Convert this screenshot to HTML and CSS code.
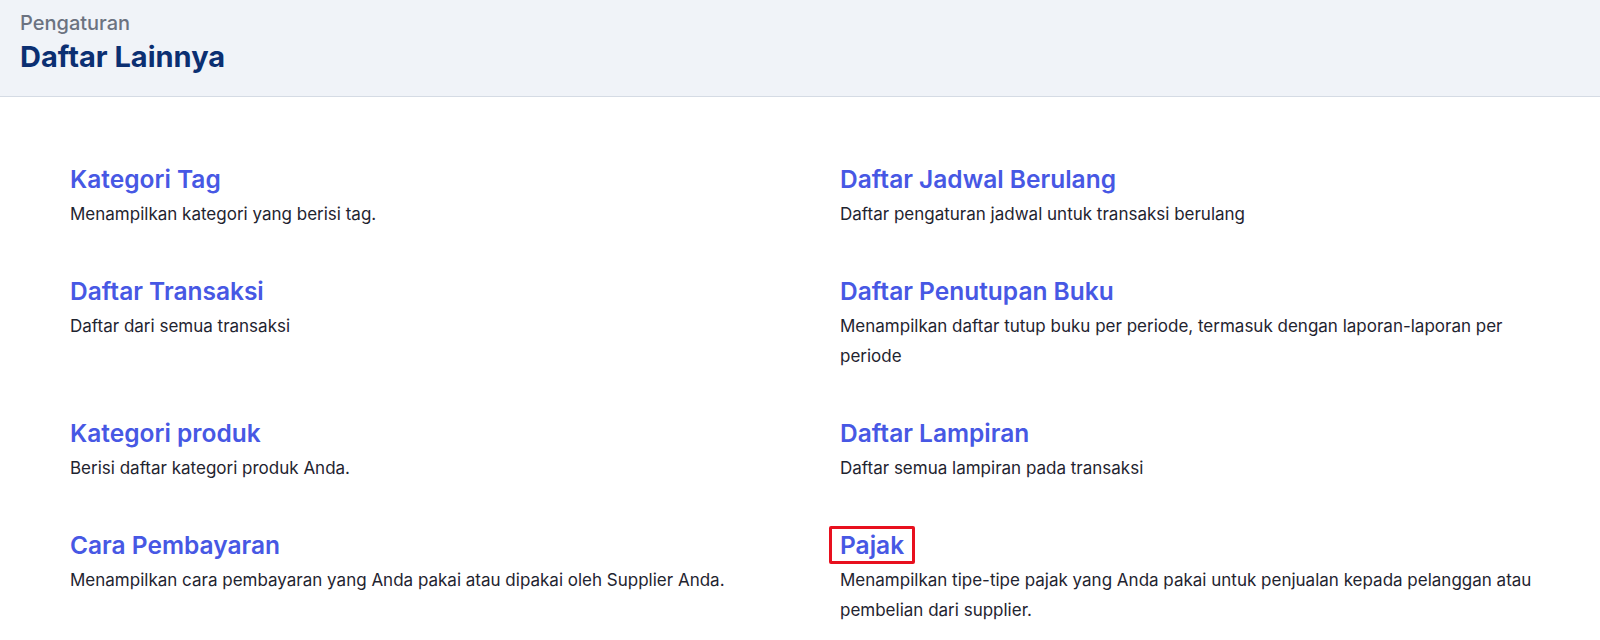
FILE: index.html
```html
<!DOCTYPE html>
<html lang="id">
<head>
<meta charset="utf-8">
<title>Daftar Lainnya</title>
<link rel="stylesheet" href="styles.css">
</head>
<body>
<header class="page-header">
  <div class="crumb">Pengaturan</div>
  <h1 class="page-title">Daftar Lainnya</h1>
</header>
<main class="list-grid">
  <section class="item">
    <a class="item-title" href="#">Kategori Tag</a>
    <p class="item-desc">Menampilkan kategori yang berisi tag.</p>
  </section>
  <section class="item">
    <a class="item-title" href="#">Daftar Jadwal Berulang</a>
    <p class="item-desc">Daftar pengaturan jadwal untuk transaksi berulang</p>
  </section>
  <section class="item">
    <a class="item-title" href="#">Daftar Transaksi</a>
    <p class="item-desc">Daftar dari semua transaksi</p>
  </section>
  <section class="item">
    <a class="item-title" href="#">Daftar Penutupan Buku</a>
    <p class="item-desc">Menampilkan daftar tutup buku per periode, termasuk dengan laporan-laporan per periode</p>
  </section>
  <section class="item">
    <a class="item-title" href="#">Kategori produk</a>
    <p class="item-desc">Berisi daftar kategori produk Anda.</p>
  </section>
  <section class="item">
    <a class="item-title" href="#">Daftar Lampiran</a>
    <p class="item-desc">Daftar semua lampiran pada transaksi</p>
  </section>
  <section class="item">
    <a class="item-title" href="#">Cara Pembayaran</a>
    <p class="item-desc">Menampilkan cara pembayaran yang Anda pakai atau dipakai oleh Supplier Anda.</p>
  </section>
  <section class="item">
    <a class="item-title highlighted" href="#">Pajak</a>
    <p class="item-desc">Menampilkan tipe-tipe pajak yang Anda pakai untuk penjualan kepada pelanggan atau pembelian dari supplier.</p>
  </section>
</main>
</body>
</html>
```
FILE: styles.css
```css
* { box-sizing: border-box; }
html, body { margin: 0; padding: 0; background: #ffffff; }
body {
  font-family: Inter, "Noto Sans", "Liberation Sans", sans-serif;
  color: #1f2430;
}
.page-header {
  height: 97px;
  background: #f0f3f8;
  border-bottom: 1px solid #d5dbe4;
  padding: 10px 20px 0;
}
.crumb {
  font-size: 20px;
  line-height: 26px;
  font-weight: 500;
  color: #6b7280;
}
.page-title {
  margin: 3px 0 0;
  font-size: 29px;
  line-height: 36px;
  font-weight: 700;
  color: #0b2f72;
}
.list-grid {
  display: grid;
  grid-template-columns: 1fr 1fr;
  column-gap: 50px;
  row-gap: 46px;
  padding: 66px 40px 0 70px;
}
.item-title {
  display: inline-block;
  font-size: 24.5px;
  line-height: 32px;
  font-weight: 600;
  color: #4758e4;
  text-decoration: none;
}
.item-desc {
  margin: 4px 0 0;
  font-size: 17px;
  line-height: 30px;
  color: #1f2430;
}
.highlighted {
  border: 3px solid #e8101e;
  border-radius: 2px;
  padding: 0 8px;
  margin: -3px 0 -3px -11px;
}
```
